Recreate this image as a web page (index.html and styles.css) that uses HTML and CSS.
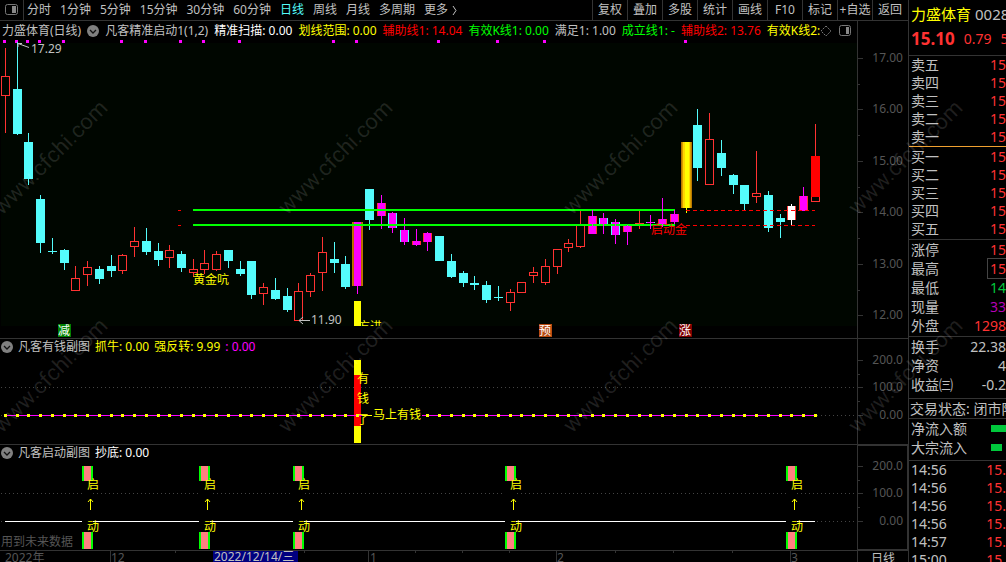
FILE: index.html
```
<!DOCTYPE html>
<html lang="zh-CN">
<head>
    <meta charset="UTF-8">
    <title>力盛体育 日线</title>
    <link rel="stylesheet" href="styles.css">
</head>
<body>
<div class="app">
    <div class="main">
        <div class="toolbar">
            <button class="panel_btn" aria-label="侧栏">
                <svg width="13" height="12"><rect x="0.5" y="0.5" width="12" height="10" rx="2" fill="none" stroke="#777"/><rect x="7" y="2" width="4" height="7" fill="#888"/></svg>
            </button>
            <div class="period">
                <button>分时</button>
                <button>1分钟</button>
                <button>5分钟</button>
                <button>15分钟</button>
                <button>30分钟</button>
                <button>60分钟</button>
                <button class="on">日线</button>
                <button>周线</button>
                <button>月线</button>
                <button>多周期</button>
                <button class="more">更多
                    <svg width="5" height="11"><path d="M1 1 L4 5.5 L1 10" fill="none" stroke="#c0c0c0"/></svg>
                </button>
            </div>
            <div class="tools">
                <button>复权</button>
                <button>叠加</button>
                <button>多股</button>
                <button>统计</button>
                <button>画线</button>
                <button>F10</button>
                <button>标记</button>
                <button>+自选</button>
                <button>返回</button>
            </div>
        </div>

        <!-- K线主图 -->
        <div class="pane pane_k">
            <div class="plot">
                <div class="legend">
                    <span>力盛体育(日线)</span>
                    <button class="fold" aria-label="折叠"><svg width="12" height="12"><circle cx="6" cy="6" r="6" fill="#808080"/><path d="M3 5 L6 8 L9 5" fill="none" stroke="#111" stroke-width="1.3"/></svg></button>
                    <span>凡客精准启动1(1,2)</span>
                    <span class="white">精准扫描: 0.00</span>
                    <span class="yellow">划线范围: 0.00</span>
                    <span class="red">辅助线1: 14.04</span>
                    <span class="green">有效K线1: 0.00</span>
                    <span>满足1: 1.00</span>
                    <span class="green">成立线1: -</span>
                    <span class="red">辅助线2: 13.76</span>
                    <span class="yellow">有效K线2:</span>
                    <div class="corner">
                        <svg width="12" height="12"><path d="M6 1 L11 6 L6 11 L1 6 Z" fill="none" stroke="#777" stroke-dasharray="2 1"/></svg>
                        <svg width="13" height="12"><rect x="0.5" y="0.5" width="11" height="10" rx="2" fill="none" stroke="#777"/><rect x="7" y="2" width="3" height="7" fill="#888"/></svg>
                    </div>
                </div>
                <svg class="canvas">
                    <g id="chart_k" transform="translate(0,-40)"></g>
                </svg>
            </div>
            <svg class="axis"><g id="axis_k" transform="translate(-858,-21)"></g></svg>
        </div>

        <!-- 副图1 -->
        <div class="pane">
            <div class="plot">
                <div class="legend sub">
                    <button class="fold" aria-label="折叠"><svg width="12" height="12"><circle cx="6" cy="6" r="6" fill="#808080"/><path d="M3 5 L6 8 L9 5" fill="none" stroke="#111" stroke-width="1.3"/></svg></button>
                    <span>凡客有钱副图</span>
                    <span class="yellow">抓牛: 0.00</span>
                    <span class="yellow">强反转: 9.99</span>
                    <span class="magenta">: 0.00</span>
                </div>
                <svg class="canvas">
                    <g id="chart_a" transform="translate(0,-356)"></g>
                </svg>
            </div>
            <svg class="axis"><g id="axis_a" transform="translate(-858,-339)"></g></svg>
        </div>

        <!-- 副图2 -->
        <div class="pane">
            <div class="plot">
                <div class="legend sub">
                    <button class="fold" aria-label="折叠"><svg width="12" height="12"><circle cx="6" cy="6" r="6" fill="#808080"/><path d="M3 5 L6 8 L9 5" fill="none" stroke="#111" stroke-width="1.3"/></svg></button>
                    <span>凡客启动副图</span>
                    <span class="white">抄底: 0.00</span>
                </div>
                <svg class="canvas">
                    <g id="chart_b" transform="translate(0,-462)"></g>
                </svg>
            </div>
            <svg class="axis axis_on"><g id="axis_b" transform="translate(-858,-446)"></g></svg>
        </div>

        <div class="dates">
            <svg class="canvas"><g id="dates" transform="translate(0,-551)"></g></svg>
            <button class="cycle">日线</button>
        </div>
    </div>

    <div class="side">
        <div class="quote">
            <div class="name"><b>力盛体育</b><span>0028</span></div>
            <div class="price"><b>15.10</b><span>0.79</span><span>5</span></div>
        </div>
        <table class="book sell">
            <tr><th>卖五</th><td>15</td></tr>
            <tr><th>卖四</th><td>15</td></tr>
            <tr><th>卖三</th><td>15</td></tr>
            <tr><th>卖二</th><td>15</td></tr>
            <tr><th>卖一</th><td>15</td></tr>
        </table>
        <table class="book buy">
            <tr><th>买一</th><td>15</td></tr>
            <tr><th>买二</th><td>15</td></tr>
            <tr><th>买三</th><td>15</td></tr>
            <tr><th>买四</th><td>15</td></tr>
            <tr><th>买五</th><td>15</td></tr>
        </table>
        <table class="stat">
            <tr><th>涨停</th><td>15</td></tr>
            <tr><th>最高</th><td><span class="box">15</span></td></tr>
            <tr><th>最低</th><td class="down">14</td></tr>
            <tr><th>现量</th><td class="vol">33</td></tr>
            <tr><th>外盘</th><td>1298</td></tr>
        </table>
        <table class="stat plain">
            <tr><th>换手</th><td>22.38</td></tr>
            <tr><th>净资</th><td>4</td></tr>
            <tr><th>收益㈢</th><td>-0.2</td></tr>
        </table>
        <div class="status">交易状态: 闭市阶段</div>
        <table class="stat flow">
            <tr><th>净流入额</th><td><i class="bar"></i></td></tr>
            <tr><th>大宗流入</th><td><i class="bar short"></i></td></tr>
        </table>
        <table class="book ticks">
            <tr><th>14:56</th><td>15.</td></tr>
            <tr><th>14:56</th><td>15.</td></tr>
            <tr><th>14:56</th><td>15.</td></tr>
            <tr><th>14:56</th><td>15.</td></tr>
            <tr><th>14:57</th><td>15.</td></tr>
            <tr><th>15:00</th><td>15.</td></tr>
        </table>
    </div>

    <svg class="mark" id="mark"></svg>
</div>
<script src="chart.js"></script>
</body>
</html>
```
FILE: styles.css
```
*{
    margin: 0;
    padding: 0;
    box-sizing: border-box;
}
body{
    background: #000;
    color: #c0c0c0;
    font: 12px/18px "Noto Sans", "Noto Sans CJK SC", sans-serif;
    overflow: hidden;
}
button{
    background: none;
    border: 0;
    color: inherit;
    font: inherit;
    white-space: nowrap;
    cursor: pointer;
}
svg{
    display: block;
}
.app{
    position: relative;
    display: flex;
    height: 100vh;
    overflow: hidden;
}
.main{
    flex: 1;
    min-width: 0;
}

/* 顶部工具栏 */
.toolbar{
    display: flex;
    height: 21px;
    border-bottom: 1px solid #333;
}
.panel_btn{
    padding: 0 5px;
    border-right: 1px solid #333;
}
.period{
    display: flex;
    flex: 1;
    gap: 9px;
    padding-left: 3px;
}
.period .on{
    color: #54fcfc;
}
.more{
    display: flex;
    align-items: center;
    gap: 4px;
}
.tools{
    display: flex;
    padding-right: 1px;
}
.tools button{
    width: 35px;
    border-left: 1px solid #333;
}

/* 图表 */
.pane{
    display: flex;
    height: 106px;
    border-bottom: 1px solid #333;
}
.pane_k{
    height: 318px;
}
.plot{
    display: flex;
    flex: 1;
    flex-direction: column;
    min-width: 0;
}
.legend{
    display: flex;
    align-items: center;
    gap: 6px;
    height: 19px;
    padding: 0 2px;
    white-space: nowrap;
}
.sub{
    gap: 5px;
    height: 17px;
    padding: 0 1px 2px;
}
.corner{
    display: flex;
    gap: 7px;
    margin-right: auto;
    margin-left: -6px;
}
.canvas{
    flex: 1;
    width: 100%;
    min-height: 0;
}
.axis{
    width: 51px;
    height: 100%;
    border-left: 1px solid #333;
}
.axis_on{
    border: 1px solid #333;
}
text{
    fill: #c0c0c0;
}
.axis text,
.dates text,
.note{
    fill: #555;
}
.dates .day{
    fill: #c0c0c0;
}
.dates{
    display: flex;
    height: 20px;
}
.cycle{
    width: 51px;
    height: 16px;
    border-left: 1px solid #333;
    line-height: 14px;
}
.white{ color: #fff; }
.yellow{ color: #ff0; }
.red{ color: #f00; }
.green{ color: #0f0; }
.magenta{ color: #f0f; }

/* 右侧行情 */
.side{
    width: 98px;
    border-left: 1px solid #333;
    overflow: hidden;
    font-size: 14px;
    white-space: nowrap;
}
.quote{
    height: 56px;
    padding-left: 2px;
    border-bottom: 1px solid #333;
}
.name{
    display: flex;
    gap: 4px;
    font-size: 15px;
    line-height: 28px;
}
.name b{
    color: #ff0;
    font-weight: normal;
}
.price{
    display: flex;
    gap: 9px;
    color: #ff3232;
    line-height: 22px;
}
.price b{
    font-size: 17px;
}
table{
    width: 100%;
    border-collapse: separate;
    border-spacing: 0;
    border-bottom: 1px solid #333;
}
th{
    padding-left: 2px;
    font-weight: normal;
    text-align: left;
}
td{
    color: #ff3232;
    text-align: right;
}
tr{
    height: 18px;
}
.stat{
    padding-bottom: 1px;
    line-height: 19px;
}
.stat tr{
    height: 19px;
}
.sell{
    border-bottom-color: #f0a030;
}
.buy{
    padding: 1px 0;
}
.plain{
    padding-bottom: 4px;
}
.plain td{
    color: #c0c0c0;
}
.stat .down{
    color: #00c83c;
}
.stat .vol{
    color: #b400b4;
}
.box{
    display: block;
    width: 18px;
    margin-left: auto;
    outline: 1px solid #444;
}
.status{
    height: 20px;
    padding-left: 1px;
    border-bottom: 1px solid #333;
    line-height: 19px;
}
.flow{
    padding-bottom: 3px;
}
.bar{
    display: block;
    width: 15px;
    height: 7px;
    margin-left: auto;
    background: #00c83c;
}
.short{
    width: 11px;
    margin-right: 4px;
}
.ticks{
    border: 0;
}

/* 水印 */
.mark{
    position: absolute;
    top: 0;
    left: 0;
    width: 100%;
    height: 100%;
    pointer-events: none;
}
.mark text{
    fill: #fff;
    fill-opacity: 0.12;
    font: 22px Roboto, sans-serif;
}
```
FILE: chart.js
```
var NS = 'http://www.w3.org/2000/svg'
var RED = '#ff3232', CYAN = '#54fcfc', PINK = '#f0f', LINE = '#333'

var $ = function (id) {
    return document.getElementById(id)
}

// 添加一个 svg 节点
function add(box, tag, attrs, text) {
    var el = document.createElementNS(NS, tag)
    for (var k in attrs) {
        el.setAttribute(k, attrs[k])
    }
    if (text) {
        el.textContent = text
    }
    box.appendChild(el)
    return el
}

function rect(box, x, y, w, h, fill) {
    return add(box, 'rect', {x: x, y: y, width: w, height: h, fill: fill})
}

function label(box, x, y, text, fill) {
    return add(box, 'text', fill ? {x: x, y: y, style: 'fill:' + fill} : {x: x, y: y}, text)
}

function dotted(box, y) {
    add(box, 'path', {d: 'M1 ' + (y + 0.5) + 'H857', stroke: '#444', 'stroke-dasharray': '1 3'})
}

// 第 i 根K线的中心
function cx(i) {
    return Math.floor(5.5 + i * 11.735)
}

// 最高 实体上沿 实体下沿 最低 类型
// r 空心阳线  c 阴线  mr mc 洋红  g 金色  m 大阳  w 白色  f 实心红
var data = [
    [48, 76, 96, 133, 'r'], [42, 89, 134, 135, 'c'], [133, 142, 179, 185, 'c'], [195, 199, 243, 253, 'c'],
    [238, 251, 252, 254, 'c'], [249, 250, 263, 270, 'c'], [266, 278, 291, 291, 'r'], [261, 267, 275, 286, 'r'],
    [266, 269, 279, 284, 'c'], [255, 266, 271, 277, 'c'], [254, 255, 271, 274, 'r'], [227, 241, 247, 257, 'r'],
    [228, 241, 252, 255, 'c'], [243, 251, 260, 266, 'c'], [245, 250, 258, 268, 'r'], [251, 254, 268, 272, 'c'],
    [259, 269, 273, 277, 'r'], [250, 263, 270, 274, 'r'], [251, 254, 270, 271, 'r'], [250, 250, 261, 268, 'c'],
    [261, 269, 274, 276, 'c'], [261, 261, 295, 299, 'c'], [283, 287, 294, 305, 'r'], [278, 290, 299, 300, 'c'],
    [288, 296, 310, 312, 'c'], [283, 291, 321, 321, 'r'], [273, 275, 292, 297, 'r'], [237, 252, 273, 291, 'r'],
    [242, 259, 263, 273, 'c'], [256, 264, 287, 289, 'c'], [222, 222, 286, 294, 'm'], [189, 189, 220, 230, 'c'],
    [195, 203, 216, 229, 'mr'], [212, 213, 228, 233, 'mc'], [218, 230, 242, 245, 'mc'], [229, 241, 245, 246, 'mr'],
    [232, 233, 242, 251, 'mr'], [236, 236, 261, 261, 'c'], [254, 261, 277, 278, 'c'], [271, 273, 283, 287, 'c'],
    [276, 283, 285, 290, 'c'], [281, 285, 300, 303, 'c'], [286, 297, 298, 301, 'c'], [289, 292, 303, 311, 'r'],
    [282, 282, 293, 293, 'r'], [267, 272, 276, 283, 'r'], [259, 266, 283, 285, 'r'], [249, 249, 267, 274, 'r'],
    [239, 243, 248, 252, 'r'], [211, 225, 247, 248, 'r'], [210, 216, 234, 234, 'mr'], [213, 218, 225, 234, 'mc'],
    [219, 222, 235, 244, 'mc'], [225, 226, 232, 245, 'mr'], [211, 223, 224, 229, 'r'], [215, 222, 223, 229, 'mc'],
    [198, 219, 225, 227, 'mr'], [210, 214, 222, 224, 'mr'], [142, 142, 208, 213, 'g'], [109, 125, 168, 181, 'c'],
    [113, 139, 185, 185, 'r'], [140, 153, 168, 176, 'c'], [174, 175, 185, 194, 'c'], [185, 185, 204, 210, 'c'],
    [151, 193, 197, 203, 'r'], [191, 195, 228, 232, 'c'], [214, 218, 222, 238, 'c'], [204, 206, 220, 225, 'w'],
    [187, 196, 211, 211, 'mr'], [124, 156, 202, 202, 'f']
]

function candle(box, x, d) {
    var t = d[4], top = d[1], h = d[2] - d[1]
    var color = {r: RED, f: RED, c: CYAN, g: '#ff0', w: '#fff'}[t] || PINK
    rect(box, x, d[0], 1, top - d[0], color)
    rect(box, x, d[2], 1, d[3] - d[2], color)
    if (t === 'g' || t === 'm') {
        // 渐变柱
        var steps = t === 'g' ? ['#b87800', '#d89c00', '#ffd800'] : ['#b87800', '#c06000', PINK]
        rect(box, x - 5, top, 11, h, steps[0])
        rect(box, x - 4, top, 9, h, steps[1])
        rect(box, x - 3, top, 7, h, steps[2])
        rect(box, x - 1, top, 4, h, t === 'g' ? '#ff0' : PINK)
    } else if ((t === 'r' || t === 'f') && h > 1) {
        add(box, 'rect', {x: x - 3.5, y: top + 0.5, width: 8, height: h - 1, fill: '#000600', stroke: RED})
        if (t === 'f') {
            rect(box, x - 4, top, 9, h - 5, '#f00')
        }
    } else {
        rect(box, x - 4, top, 9, h, t === 'mr' || t === 'w' ? RED : t === 'mc' ? CYAN : color)
        if (t !== 'c' && t !== 'r') {
            rect(box, x - 3, top, 7, h, color)
        }
    }
}

// 主图
var k = $('chart_k')
rect(k, 1, 43, 856, 283, '#000600')
var dots = [0, 1, 2, 3, 5, 10, 12, 15, 17, 20, 28, 30, 37, 42, 46, 58]
dots.forEach(function (i) {
    rect(k, cx(i) - 2, 40, 3, 3, PINK)
})
data.forEach(function (d, i) {
    candle(k, cx(i), d)
});
[210, 225].forEach(function (y) {
    rect(k, 193, y - 1, 482, 2, '#0f0')
    rect(k, 178, y, 3, 1, '#f00')
    add(k, 'path', {d: 'M686 ' + (y + 0.5) + 'H815', stroke: '#f00', 'stroke-dasharray': '4 3'})
})
// 绿线之上的洋红K线
for (var i = 50; i < 58; i++) {
    if (data[i][4] !== 'r') {
        rect(k, cx(i), data[i][0], 1, data[i][3] - data[i][0], PINK)
    }
}
label(k, 193, 284, '黄金吭', '#ff0')
label(k, 651, 234, '启动金', '#f00')
label(k, 31, 53, '17.29')
label(k, 311, 324, '11.90')
add(k, 'path', {d: 'M29 47.5 L18 43.5 M18 47 V43.5 H22', fill: 'none', stroke: '#c0c0c0'})
add(k, 'path', {d: 'M310 320.5 H299 M303 317 L299 320.5 L303 324', fill: 'none', stroke: '#c0c0c0'})
label(k, 358, 331, '方进', '#ff0')
rect(k, 354, 301, 7, 25, '#ff0')
rect(k, 354, 326, 40, 10, '#000')
var tags = [[58, '减', '#008000'], [539, '预', '#b84a10'], [679, '涨', '#800000']]
tags.forEach(function (t) {
    rect(k, t[0], 324, 13, 13, t[2])
    label(k, t[0], 335, t[1], '#fff')
})

// 副图1
var a = $('chart_a')
dotted(a, 387)
dotted(a, 415)
rect(a, 354, 360, 7, 83, '#ff0')
rect(a, 354, 375, 7, 51, '#f00')
rect(a, 5, 415, 811, 1, PINK)
for (i = 0; i < 70; i++) {
    rect(a, cx(i) - 1, 414, 3, 3, '#ff0')
}
rect(a, 366, 409, 56, 12, '#000')
rect(a, 362, 415, 10, 1, '#ff0')
label(a, 357, 383, '有', '#ff0')
label(a, 357, 403, '钱', '#ff0')
label(a, 357, 424, '了', '#ff0')
label(a, 373, 419, '马上有钱', '#ff0')

// 副图2
var b = $('chart_b')
dotted(b, 493)
dotted(b, 521)
rect(b, 5, 520, 810, 2, '#000')
rect(b, 5, 521, 810, 1, '#fff');
[7, 17, 25, 43, 67].forEach(function (i) {
    var x = cx(i) - 5
    rect(b, x, 481, 11, 51, '#000')
    rect(b, x, 466, 11, 15, '#0f0')
    rect(b, x + 2, 466, 7, 15, '#ff8080')
    rect(b, x, 532, 11, 17, '#0f0')
    rect(b, x + 2, 532, 7, 17, '#ff8080')
    label(b, x + 5, 489, '启', '#ff0')
    label(b, x + 5, 531, '动', '#ff0')
    add(b, 'path', {d: 'M' + (x + 8.5) + ' 510V499M' + (x + 6) + ' 502l2.5 -3l2.5 3', fill: 'none', stroke: '#ff0'})
})
add(b, 'text', {x: 1, y: 546, 'class': 'note'}, '用到未来数据')

// 纵坐标
function axis(box, list) {
    list.forEach(function (p, n) {
        rect(box, 858, p[0], 5, 1, LINE)
        if (list[n + 1]) {
            rect(box, 858, Math.round((p[0] + list[n + 1][0]) / 2), 2, 1, LINE)
        }
        add(box, 'text', {x: 903, y: p[0] + 4, 'text-anchor': 'end'}, p[1])
    })
}
axis($('axis_k'), [[58, '17.00'], [109, '16.00'], [161, '15.00'], [212, '14.00'], [264, '13.00'], [315, '12.00']])
axis($('axis_a'), [[360, '200.0'], [387, '100.0'], [415, '0.00']])
axis($('axis_b'), [[466, '200.0'], [493, '100.0'], [521, '0.00']])

// 时间轴
var t = $('dates');
[110, 368, 556, 790].forEach(function (x) {
    rect(t, x, 551, 1, 12, LINE)
});
[175, 304, 415, 462, 509, 615, 673, 732].forEach(function (x) {
    rect(t, x, 551, 1, 2, LINE)
})
label(t, 5, 562, '2022年')
label(t, 111, 562, '12')
rect(t, 213, 551, 85, 12, '#000080')
add(t, 'text', {x: 214, y: 561, 'class': 'day'}, '2022/12/14/三')
label(t, 370, 562, '1')
label(t, 557, 562, '2')
label(t, 791, 562, '3')

// 水印
for (var r = 0; r < 2; r++) {
    for (var c = 0; c < 4; c++) {
        var x = c * 285 + 2, y = 216 + r * 218
        add($('mark'), 'text', {x: x, y: y, transform: 'rotate(-45 ' + x + ' ' + y + ')'}, 'www.cfchi.com')
    }
}
```
